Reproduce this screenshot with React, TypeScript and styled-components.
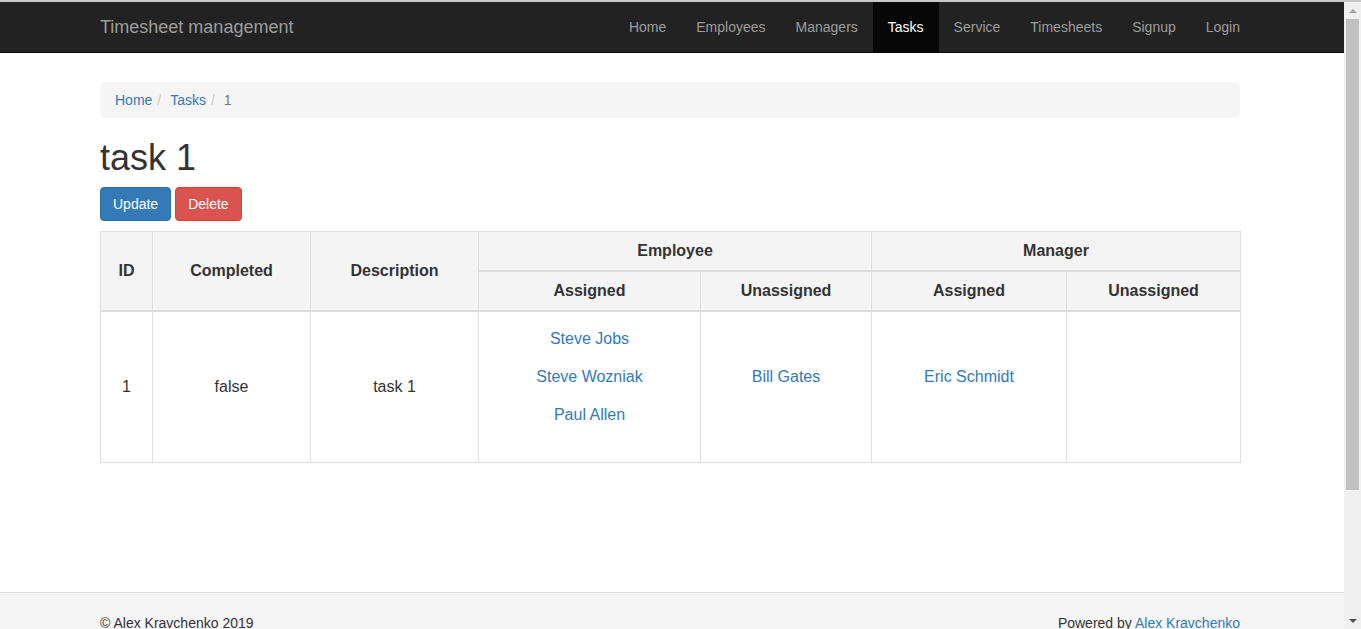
import React from 'react';
import styled, { createGlobalStyle } from 'styled-components';

const GlobalStyle = createGlobalStyle`
  body {
    margin: 0;
    padding-right: 17px;
    border-top: 2px solid #c8c8c8;
    font-family: "Liberation Sans", Arial, Helvetica, sans-serif;
    font-size: 14px;
    line-height: 20px;
    color: #333;
    background: #fff;
  }
  * {
    box-sizing: border-box;
  }
  a {
    color: #337ab7;
    text-decoration: none;
  }
`;

const Container = styled.div`
  width: 1170px;
  margin: 0 auto;
  padding: 0 17px 0 13px;
`;

const Navbar = styled.nav`
  background: #222;
  border-bottom: 1px solid #080808;
  min-height: 51px;
`;

const NavInner = styled(Container)`
  display: flex;
  justify-content: space-between;
  align-items: stretch;
  height: 50px;
`;

const Brand = styled.a`
  font-size: 18px;
  line-height: 20px;
  padding: 15px 15px;
  margin-left: -15px;
  color: #9d9d9d;
`;

const NavList = styled.ul`
  display: flex;
  list-style: none;
  margin: 0 -15px 0 0;
  padding: 0;
`;

const NavLink = styled.a<{ $active?: boolean }>`
  display: block;
  padding: 15px;
  line-height: 20px;
  color: ${(p) => (p.$active ? '#fff' : '#9d9d9d')};
  background: ${(p) => (p.$active ? '#080808' : 'transparent')};
`;

const Main = styled(Container)`
  padding-top: 29px;
  min-height: 539px;
`;

const Breadcrumb = styled.ol`
  display: flex;
  list-style: none;
  margin: 0 0 20px;
  padding: 8px 15px;
  background: #f5f5f5;
  border-radius: 4px;
`;

const Crumb = styled.li<{ $active?: boolean }>`
  color: ${(p) => (p.$active ? '#777' : 'inherit')};
  li + &::before {
    content: '/\\00a0';
    padding: 0 5px;
    color: #ccc;
  }
`;

const Title = styled.h1`
  font-size: 36px;
  font-weight: 500;
  line-height: 1.1;
  margin: 20px 0 9px;
`;

const Actions = styled.div`
  display: flex;
  gap: 4px;
  margin-bottom: 10px;
`;

const Button = styled.button<{ $variant: 'primary' | 'danger' }>`
  font-family: inherit;
  font-size: 14px;
  line-height: 20px;
  padding: 6px 12px;
  border-radius: 4px;
  color: #fff;
  border: 1px solid ${(p) => (p.$variant === 'primary' ? '#2e6da4' : '#d43f3a')};
  background: ${(p) => (p.$variant === 'primary' ? '#337ab7' : '#d9534f')};
  cursor: pointer;
`;

const Table = styled.table`
  width: 1140px;
  table-layout: fixed;
  border-collapse: collapse;
  border: 1px solid #ddd;
  font-size: 16px;
  margin-bottom: 20px;
`;

const Th = styled.th`
  background: #f4f4f4;
  border: 1px solid #ddd;
  border-bottom-width: 2px;
  padding: 8px;
  line-height: 22px;
  font-weight: bold;
  text-align: center;
  vertical-align: middle;
`;

const Td = styled.td`
  border: 1px solid #ddd;
  padding: 8px;
  line-height: 22px;
  text-align: center;
  vertical-align: middle;
`;

const PeopleList = styled.ul`
  list-style: none;
  margin: 0 0 20px;
  padding: 0;
`;

const Person = styled.li`
  padding: 8px 0;
`;

const Footer = styled.footer`
  background: #f5f5f5;
  border-top: 1px solid #ddd;
  min-height: 203px;
  padding-top: 20px;
`;

const FooterInner = styled(Container)`
  display: flex;
  justify-content: space-between;
`;

/* the window scrollbar of the screenshot, pinned over the right edge */
const Scrollbar = styled.div`
  position: fixed;
  top: 2px;
  right: 0;
  bottom: 0;
  width: 17px;
  background: #f0f0f0;
  display: flex;
  flex-direction: column;
  align-items: center;
`;

const Arrow = styled.div<{ $dir: 'up' | 'down' }>`
  height: 17px;
  width: 17px;
  flex: none;
  display: flex;
  align-items: center;
  justify-content: center;
  &::after {
    content: '';
    border-left: 4px solid transparent;
    border-right: 4px solid transparent;
    ${(p) =>
      p.$dir === 'up'
        ? 'border-bottom: 4px solid #a3a3a3;'
        : 'border-top: 4px solid #505050;'}
  }
`;

const Track = styled.div`
  flex: 1;
  width: 13px;
`;

const Thumb = styled.div`
  height: 471px;
  background: #c1c1c1;
`;

const navItems = ['Home', 'Employees', 'Managers', 'Tasks', 'Service', 'Timesheets', 'Signup', 'Login'];

const People = ({ names }: { names: string[] }) => (
  <PeopleList>
    {names.map((n) => (
      <Person key={n}>
        <a href="#">{n}</a>
      </Person>
    ))}
  </PeopleList>
);

export default function App() {
  return (
    <>
      <GlobalStyle />
      <Navbar>
        <NavInner>
          <Brand href="#">Timesheet management</Brand>
          <NavList>
            {navItems.map((item) => (
              <li key={item}>
                <NavLink href="#" $active={item === 'Tasks'}>
                  {item}
                </NavLink>
              </li>
            ))}
          </NavList>
        </NavInner>
      </Navbar>
      <Main>
        <Breadcrumb>
          <Crumb>
            <a href="#">Home</a>
          </Crumb>
          <Crumb>
            <a href="#">Tasks</a>
          </Crumb>
          <Crumb $active>1</Crumb>
        </Breadcrumb>
        <Title>task 1</Title>
        <Actions>
          <Button $variant="primary">Update</Button>
          <Button $variant="danger">Delete</Button>
        </Actions>
        <Table>
          <colgroup>
            <col style={{ width: 52 }} />
            <col style={{ width: 158 }} />
            <col style={{ width: 168 }} />
            <col style={{ width: 222 }} />
            <col style={{ width: 171 }} />
            <col style={{ width: 195 }} />
            <col style={{ width: 174 }} />
          </colgroup>
          <thead>
            <tr>
              <Th rowSpan={2}>ID</Th>
              <Th rowSpan={2}>Completed</Th>
              <Th rowSpan={2}>Description</Th>
              <Th colSpan={2}>Employee</Th>
              <Th colSpan={2}>Manager</Th>
            </tr>
            <tr>
              <Th>Assigned</Th>
              <Th>Unassigned</Th>
              <Th>Assigned</Th>
              <Th>Unassigned</Th>
            </tr>
          </thead>
          <tbody>
            <tr>
              <Td>1</Td>
              <Td>false</Td>
              <Td>task 1</Td>
              <Td>
                <People names={['Steve Jobs', 'Steve Wozniak', 'Paul Allen']} />
              </Td>
              <Td>
                <People names={['Bill Gates']} />
              </Td>
              <Td>
                <People names={['Eric Schmidt']} />
              </Td>
              <Td>
                <People names={[]} />
              </Td>
            </tr>
          </tbody>
        </Table>
      </Main>
      <Footer>
        <FooterInner>
          <span>© Alex Kravchenko 2019</span>
          <span>
            Powered by <a href="#">Alex Kravchenko</a>
          </span>
        </FooterInner>
      </Footer>
      <Scrollbar>
        <Arrow $dir="up" />
        <Track>
          <Thumb />
        </Track>
        <Arrow $dir="down" />
      </Scrollbar>
    </>
  );
}
